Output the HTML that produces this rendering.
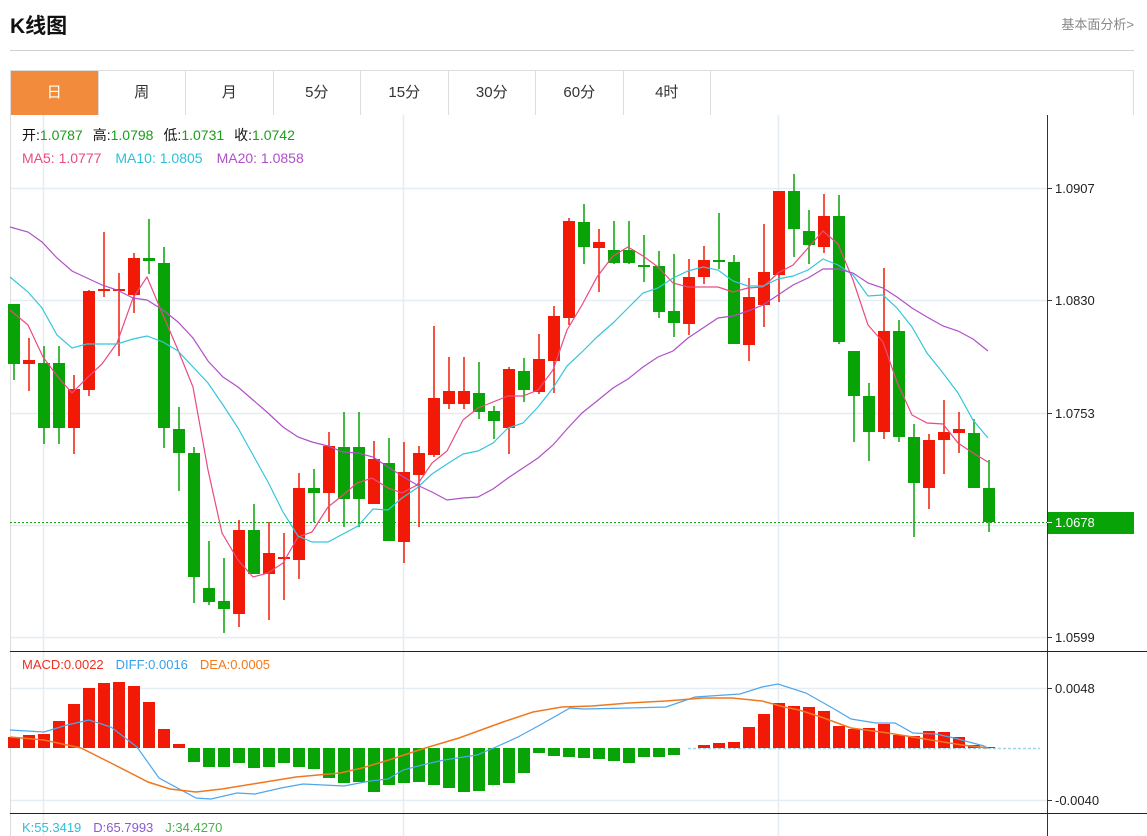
<!DOCTYPE html>
<html><head><meta charset="utf-8"><style>
*{margin:0;padding:0;box-sizing:border-box}
body{width:1147px;height:836px;background:#fff;font-family:"Liberation Sans","Noto Sans CJK SC",sans-serif;position:relative;overflow:hidden}
.title{position:absolute;left:10px;top:10px;font-size:21px;font-weight:bold;color:#111}
.more{position:absolute;right:13px;top:14px;font-size:13px;color:#888}
.hr{position:absolute;left:10px;top:50px;width:1124px;height:1px;background:#d0d0d0}
.tabs{position:absolute;left:10px;top:70px;width:1124px;height:45px;border:1px solid #ddd;border-bottom:none;display:flex}
.tab{width:87.5px;height:44px;line-height:44px;text-align:center;font-size:15px;color:#333;border-right:1px solid #ddd}
.tab.on{background:#f28c3c;color:#fff}
svg{position:absolute;left:0;top:0}
</style></head><body>
<div class="title">K线图</div>
<div class="more">基本面分析&gt;</div>
<div class="hr"></div>
<div class="tabs"><div class="tab on">日</div><div class="tab">周</div><div class="tab">月</div><div class="tab">5分</div><div class="tab">15分</div><div class="tab">30分</div><div class="tab">60分</div><div class="tab">4时</div></div>
<svg id="s" width="1147" height="836" style="top:0"></svg>
<script>
var c=[
['G',304,364,304,380],['R',360,364,338,391],['G',363,428,346,444],['G',363,428,346,444],['R',389,428,375,454],
['R',291,390,290,396],['R',289,291,232,297],['R',289,291,273,356],['R',258,295,253,313],['G',258,261,219,274],
['G',263,428,247,448],['G',429,453,407,491],['G',453,577,447,603],['G',588,602,541,605],['G',601,609,558,633],
['R',530,614,520,627],['G',530,574,504,574],['R',553,574,522,620],['R',557,559,533,600],['R',488,560,473,579],
['G',488,493,469,522],['R',446,493,432,522],['G',447,499,412,527],['G',447,499,412,527],['R',459,504,441,504],
['G',463,541,438,541],['R',472,542,442,563],['R',453,475,446,527],['R',398,455,326,457],['R',391,404,357,409],
['R',391,404,357,409],['G',393,412,362,419],['G',411,421,406,439],['R',369,428,367,454],['G',371,390,358,402],
['R',359,392,334,394],['R',316,361,306,393],['R',221,318,218,325],['G',222,247,204,264],['R',242,248,229,292],
['G',250,263,221,264],['G',250,263,221,264],['G',265,267,235,282],['G',266,312,251,318],['G',311,323,254,337],
['R',277,324,259,335],['R',260,277,246,284],['G',260,262,213,269],['G',262,344,255,344],['R',297,345,278,361],
['R',272,305,224,327],['R',191,275,191,302],['G',191,229,174,257],['G',231,245,210,264],['R',216,247,194,253],
['G',216,342,195,344],['G',351,396,351,442],['G',396,432,383,461],['R',331,432,268,439],['G',331,437,320,442],
['G',437,483,424,537],['R',440,488,434,509],['R',432,440,400,474],['R',429,433,412,453],['G',433,488,419,488],
['G',488,522,460,532]];
var ma5=[[10,310],[28,325],[43,357],[58,377],[72,393],[88,377],[102,364],[117,343],[133,298],[147,277],[163,315],[178,350],[193,387],[208,470],[222,533],[238,560],[253,577],[268,573],[283,563],[298,537],[312,532],[328,507],[343,495],[357,483],[372,478],[388,488],[402,493],[417,485],[432,463],[447,451],[463,420],[478,408],[493,402],[508,396],[523,396],[538,390],[553,370],[567,330],[582,305],[597,277],[613,256],[628,247],[643,256],[658,267],[673,283],[688,287],[703,287],[718,287],[733,292],[748,288],[763,287],[778,273],[793,265],[808,248],[823,231],[838,244],[853,280],[868,325],[883,342],[897,382],[912,415],[927,423],[943,424],[958,443],[973,453],[988,462]];
var ma10=[[10,277],[28,292],[42,308],[57,335],[72,348],[87,344],[102,344],[117,344],[133,339],[147,336],[163,342],[178,351],[193,367],[208,383],[223,405],[238,428],[253,455],[268,482],[283,512],[298,536],[312,542],[328,542],[343,534],[358,526],[373,509],[388,510],[402,498],[417,488],[432,474],[447,464],[463,454],[478,451],[493,443],[508,428],[523,423],[538,407],[553,388],[567,366],[582,352],[597,337],[613,323],[628,308],[643,293],[658,288],[673,278],[688,271],[703,267],[718,270],[733,281],[748,286],[763,286],[778,279],[793,276],[808,270],[823,259],[838,265],[853,275],[868,296],[883,295],[897,308],[912,327],[927,353],[943,373],[958,393],[973,420],[988,438]];
var ma20=[[10,227],[28,232],[42,242],[57,258],[72,271],[87,278],[102,285],[117,290],[133,298],[147,300],[163,310],[178,322],[193,338],[208,361],[223,377],[238,387],[253,400],[268,413],[283,427],[298,437],[312,442],[328,446],[343,452],[358,453],[373,457],[388,467],[402,476],[417,485],[432,492],[447,500],[463,498],[478,497],[493,489],[508,478],[523,468],[538,458],[553,445],[567,429],[582,413],[597,401],[613,388],[628,379],[643,367],[658,357],[673,351],[688,338],[703,328],[718,318],[733,316],[748,311],[763,305],[778,295],[793,285],[808,278],[823,269],[838,269],[853,273],[868,283],[883,288],[897,297],[912,308],[927,317],[943,326],[958,331],[973,339],[988,351]];
var diff=[[10,730],[44,732],[67,725],[89,720],[111,727],[137,747],[159,778],[196,798],[211,799],[237,793],[255,794],[281,788],[303,784],[344,786],[370,781],[388,779],[403,770],[422,765],[444,760],[477,755],[496,747],[518,737],[540,725],[570,708],[584,709],[629,708],[666,707],[695,697],[740,694],[762,687],[778,684],[806,693],[836,710],[851,719],[876,723],[895,723],[913,733],[936,734],[954,738],[969,742],[984,746],[988,748]];
var dea=[[10,737],[44,740],[81,748],[111,763],[148,782],[170,789],[196,792],[222,789],[259,783],[296,777],[340,773],[362,768],[392,759],[422,749],[459,738],[503,722],[533,712],[562,707],[592,706],[629,703],[666,701],[703,698],[732,698],[762,701],[784,707],[799,710],[821,717],[851,728],[888,733],[925,739],[962,745],[988,748]];
var macdR=[737,735,734,721,704,688,683,682,686,702,729,744];
var macdG=[762,767,767,763,768,767,763,767,769,778,783,782,792,785,783,782,785,788,792,791,785,783,773,753,756,757,758,759,761,763,757,757,755];
var macdR2=[745,743,742,727,714,703,706,707,711,726,729,728,724,735,736,731,732,737,745,747];
var h='';
function L(x1,y1,x2,y2,col,w,ex){h+='<line x1="'+x1+'" y1="'+y1+'" x2="'+x2+'" y2="'+y2+'" stroke="'+col+'" stroke-width="'+(w||1)+'" '+(ex||'')+'/>';}
function T(x,y,t,col,fs){h+='<text x="'+x+'" y="'+y+'" fill="'+col+'" font-size="'+(fs||13)+'">'+t+'</text>';}
var g='#e4edf3';
[188,300,413,525,637,688,800].forEach(function(y){L(10,y+.5,1047,y+.5,g,1.5)});
[43,403,778].forEach(function(x){L(x+.5,115,x+.5,836,g,1.5)});
L(10.5,115,10.5,836,'#ddd');
L(1047.5,115,1047.5,836,'#333');
L(10,651.5,1147,651.5,'#222');L(10,813.5,1147,813.5,'#222');
L(10,522.5,1047,522.5,'#1a9e1a',1,'stroke-dasharray="2,2"');
L(688,748.5,1040,748.5,'#9fd4ea',1.5,'stroke-dasharray="3,2"');
function P(a,col,w){h+='<polyline fill="none" stroke="'+col+'" stroke-width="'+(w||1.2)+'" points="'+a.map(function(p){return p.join(',')}).join(' ')+'"/>';}
c.forEach(function(k,i){var x=14+15*i,col=k[0]=='R'?'#f21a06':'#07a307';
L(x,k[3],x,k[4],col,1.5);var bh=Math.max(k[2]-k[1],2);h+='<rect x="'+(x-6)+'" y="'+k[1]+'" width="12" height="'+bh+'" fill="'+col+'"/>';});
P(ma5,'#ea4a80');P(ma10,'#35c6dc');P(ma20,'#b050c8');
function bar(i,y,col){var x=14+15*i;var t=Math.min(y,748),b=Math.max(y,748);h+='<rect x="'+(x-6)+'" y="'+t+'" width="12" height="'+(b-t)+'" fill="'+col+'"/>';}
macdR.forEach(function(y,i){bar(i,y,'#f21a06')});
macdG.forEach(function(y,i){bar(12+i,y,'#07a307')});
macdR2.forEach(function(y,i){bar(46+i,y,'#f21a06')});
P(diff,'#4ea6ee',1.2);P(dea,'#f07820',1.5);
h+='<rect x="1048" y="512" width="86" height="22" fill="#07a307"/>';
[[188,'1.0907'],[300,'1.0830'],[413,'1.0753'],[637,'1.0599'],[688,'0.0048'],[800,'-0.0040']].forEach(function(a){L(1047,a[0]+.5,1052,a[0]+.5,'#333');T(1055,a[0]+5,a[1],'#222',13)});
L(1047,522.5,1052,522.5,'#fff');T(1055,527,'1.0678','#fff',13);
h+='<text x="22" y="140" font-size="14"><tspan fill="#111">开:</tspan><tspan fill="#1a9e1a">1.0787</tspan><tspan fill="#111" dx="10">高:</tspan><tspan fill="#1a9e1a">1.0798</tspan><tspan fill="#111" dx="10">低:</tspan><tspan fill="#1a9e1a">1.0731</tspan><tspan fill="#111" dx="10">收:</tspan><tspan fill="#1a9e1a">1.0742</tspan></text>';
h+='<text x="22" y="163" font-size="14"><tspan fill="#ea4a80">MA5: 1.0777</tspan><tspan fill="#2cc0d8" dx="14">MA10: 1.0805</tspan><tspan fill="#b050c8" dx="14">MA20: 1.0858</tspan></text>';
h+='<text x="22" y="669" font-size="13"><tspan fill="#f03020">MACD:0.0022</tspan><tspan fill="#3aa0ea" dx="12">DIFF:0.0016</tspan><tspan fill="#f07a1e" dx="12">DEA:0.0005</tspan></text>';
h+='<text x="22" y="832" font-size="13"><tspan fill="#2cc0d8">K:55.3419</tspan><tspan fill="#8a5ad0" dx="12">D:65.7993</tspan><tspan fill="#4cae4c" dx="12">J:34.4270</tspan></text>';
document.getElementById('s').innerHTML=h;
</script>
</body></html>
